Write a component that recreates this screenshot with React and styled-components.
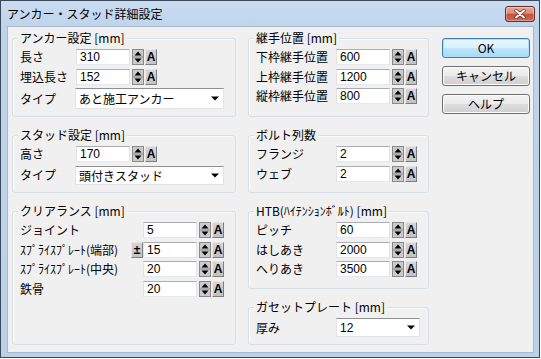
import React from "react";
import styled, { createGlobalStyle } from "styled-components";

const JP = `"Noto Sans CJK JP", "Noto Sans", sans-serif`;
const NUM = `"Liberation Sans", Arial, sans-serif`;

const GlobalStyle = createGlobalStyle`
  html, body { margin: 0; padding: 0; background: #ffffff; }
  body { font-family: ${JP}; font-size: 12px; color: #000; }
  * { box-sizing: border-box; }
`;

const Window = styled.div`
  width: 540px;
  height: 358px;
  border: 1px solid #3a4859;
  background: linear-gradient(180deg, #cadcf1 0px, #bfd4ec 26px, #bbd0e9 100%);
  display: flex;
  flex-direction: column;
`;

const TitleBar = styled.div`
  height: 25px;
  flex-shrink: 0;
  display: flex;
  align-items: center;
  justify-content: space-between;
  padding: 0 4px 0 6px;
`;

const Title = styled.div`
  font-size: 12px;
  line-height: 16px;
  color: #000;
  padding-top: 1px;
`;

const CloseButton = styled.div`
  width: 30px;
  height: 16px;
  border: 1px solid #6b2a25;
  border-radius: 3px;
  background: linear-gradient(180deg, #e9a99a 0%, #d98b7b 45%, #c5503b 52%, #cf6a52 100%);
  box-shadow: inset 0 0 0 1px rgba(255, 255, 255, 0.35);
  display: flex;
  align-items: center;
  justify-content: center;
`;

const Client = styled.div`
  flex: 1;
  margin: 0 5px 4px 6px;
  border: 1px solid #a7bad0;
  background: #f0f0f0;
  display: flex;
  padding: 11px 0 0 4px;
`;

const Column = styled.div`
  width: ${(p) => p.$w}px;
  margin-right: ${(p) => p.$mr || 0}px;
  display: flex;
  flex-direction: column;
  gap: ${(p) => p.$gap}px;
  flex-shrink: 0;
`;

const Group = styled.div`
  position: relative;
  height: ${(p) => p.$h}px;
  border: 1px solid #d5dfe5;
  border-radius: 3px;
  box-shadow: inset 1px 1px 0 #fbfbfb;
  padding: 10px 0 0 7px;
  display: flex;
  flex-direction: column;
  gap: 3.5px;
`;

const Legend = styled.div`
  position: absolute;
  top: -9px;
  left: 5px;
  padding: 0 2px;
  background: #f0f0f0;
  line-height: 16px;
  font-size: 12px;
  white-space: nowrap;
`;

const Row = styled.div`
  display: flex;
  align-items: center;
  height: ${(p) => p.$h || 16}px;
`;

const Label = styled.div`
  width: ${(p) => p.$w}px;
  flex-shrink: 0;
  white-space: nowrap;
  line-height: 16px;
  font-size: 12px;
`;

const NumBox = styled.div`
  width: 54px;
  height: 16px;
  background: #fff;
  border: 1px solid;
  border-color: #abadb3 #e2e3ea #e3e9ef #e2e3ea;
  font-family: ${NUM};
  font-size: 12px;
  line-height: 14px;
  padding-left: 3px;
  flex-shrink: 0;
`;

const Select = styled.div`
  width: ${(p) => p.$w}px;
  height: ${(p) => p.$h}px;
  background: #fff;
  border: 1px solid;
  border-color: #8e8f8f #e4e4e4 #e4e4e4 #e4e4e4;
  display: flex;
  align-items: center;
  justify-content: space-between;
  padding: 0 4px 0 3px;
  font-family: ${(p) => (p.$num ? NUM : JP)};
  font-size: 12px;
  flex-shrink: 0;
`;

const SpinBox = styled.div`
  width: 12px;
  height: 16px;
  margin-left: 2px;
  display: flex;
  flex-shrink: 0;
`;

const SmallButton = styled.div`
  width: 12px;
  height: 16px;
  margin-left: ${(p) => p.$ml || 0}px;
  margin-right: ${(p) => p.$mr || 0}px;
  border: 1px solid;
  border-color: #e6e6e6 #7d7d7d #7d7d7d #e6e6e6;
  background: linear-gradient(180deg, #d6d6d6, #c2c2c2);
  display: flex;
  align-items: center;
  justify-content: center;
  font-family: ${NUM};
  font-weight: bold;
  font-size: 12px;
  line-height: 12px;
  flex-shrink: 0;
`;

const DialogButton = styled.div`
  width: 88px;
  height: 20px;
  border: 1px solid ${(p) => (p.$primary ? "#3c7fb1" : "#707070")};
  border-radius: 3px;
  background: ${(p) =>
    p.$primary
      ? "linear-gradient(180deg, #eaf6fd 0%, #d9f0fc 48%, #bee6fd 52%, #a7d9f5 100%)"
      : "linear-gradient(180deg, #f2f2f2 0%, #ebebeb 48%, #dddddd 52%, #cfcfcf 100%)"};
  box-shadow: inset 0 0 0 1px ${(p) => (p.$primary ? "#a8e0fb" : "#fcfcfc")};
  display: flex;
  align-items: center;
  justify-content: center;
  font-size: 12px;
  line-height: 16px;
`;

const Spinner = () => (
  <SpinBox>
    <svg width="12" height="16" viewBox="0 0 12 16">
      <rect x="0.5" y="0.5" width="11" height="15" fill="#cbcbcb" stroke="#8a8a8a" />
      <line x1="1" y1="8" x2="11" y2="8" stroke="#8a8a8a" />
      <polygon points="2.5,6.5 6,2.5 9.5,6.5" fill="#000" />
      <polygon points="2.5,9.5 9.5,9.5 6,13.5" fill="#000" />
    </svg>
  </SpinBox>
);

const Arrow = () => (
  <svg width="8" height="5" viewBox="0 0 8 5">
    <polygon points="0,0.5 8,0.5 4,4.5" fill="#000" />
  </svg>
);

const NumField = ({ label, w, value, pm }) => (
  <Row>
    <Label $w={w}>{label}</Label>
    {pm && <SmallButton $mr={0}>±</SmallButton>}
    <NumBox>{value}</NumBox>
    <Spinner />
    <SmallButton $ml={1}>A</SmallButton>
  </Row>
);

const SelectField = ({ label, w, value, sw, sh, num }) => (
  <Row $h={sh}>
    <Label $w={w}>{label}</Label>
    <Select $w={sw} $h={sh} $num={num}>
      <span>{value}</span>
      <Arrow />
    </Select>
  </Row>
);

export default function App() {
  return (
    <>
      <GlobalStyle />
      <Window>
        <TitleBar>
          <Title>アンカー・スタッド詳細設定</Title>
          <CloseButton>
            <svg width="12" height="10" viewBox="0 0 12 10">
              <path d="M2 1.5 L10 8.5 M10 1.5 L2 8.5" stroke="#5a2a22" strokeWidth="3.4" strokeLinecap="round" />
              <path d="M2 1.5 L10 8.5 M10 1.5 L2 8.5" stroke="#ffffff" strokeWidth="2" strokeLinecap="round" />
            </svg>
          </CloseButton>
        </TitleBar>
        <Client>
          <Column $w={224} $mr={12} $gap={18}>
            <Group $h={79}>
              <Legend>アンカー設定 [mm]</Legend>
              <NumField label="長さ" w={56} value="310" />
              <NumField label="埋込長さ" w={56} value="152" />
              <SelectField label="タイプ" w={55} value="あと施工アンカー" sw={149} sh={21} />
            </Group>
            <Group $h={58}>
              <Legend>スタッド設定 [mm]</Legend>
              <NumField label="高さ" w={56} value="170" />
              <SelectField label="タイプ" w={55} value="頭付きスタッド" sw={149} sh={19} />
            </Group>
            <Group $h={134}>
              <Legend>クリアランス [mm]</Legend>
              <NumField label="ジョイント" w={123} value="5" />
              <NumField label="ｽﾌﾟﾗｲｽﾌﾟﾚｰﾄ(端部)" w={111} value="15" pm />
              <NumField label="ｽﾌﾟﾗｲｽﾌﾟﾚｰﾄ(中央)" w={123} value="20" />
              <NumField label="鉄骨" w={123} value="20" />
            </Group>
          </Column>
          <Column $w={181} $mr={13} $gap={18}>
            <Group $h={79}>
              <Legend>継手位置 [mm]</Legend>
              <NumField label="下枠継手位置" w={80} value="600" />
              <NumField label="上枠継手位置" w={80} value="1200" />
              <NumField label="縦枠継手位置" w={80} value="800" />
            </Group>
            <Group $h={58}>
              <Legend>ボルト列数</Legend>
              <NumField label="フランジ" w={80} value="2" />
              <NumField label="ウェブ" w={80} value="2" />
            </Group>
            <Group $h={78}>
              <Legend>HTB(ﾊｲﾃﾝｼｮﾝﾎﾞﾙﾄ) [mm]</Legend>
              <NumField label="ピッチ" w={80} value="60" />
              <NumField label="はしあき" w={80} value="2000" />
              <NumField label="へりあき" w={80} value="3500" />
            </Group>
            <Group $h={38}>
              <Legend>ガセットプレート [mm]</Legend>
              <SelectField label="厚み" w={80} value="12" sw={84} sh={19} num />
            </Group>
          </Column>
          <Column $w={88} $gap={8}>
            <DialogButton $primary>OK</DialogButton>
            <DialogButton>キャンセル</DialogButton>
            <DialogButton>ヘルプ</DialogButton>
          </Column>
        </Client>
      </Window>
    </>
  );
}
